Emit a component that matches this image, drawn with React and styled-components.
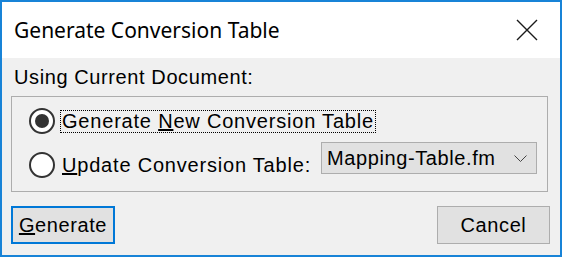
import React from "react";
import styled, { createGlobalStyle } from "styled-components";

const GlobalStyle = createGlobalStyle`
  body {
    margin: 0;
    background: #ffffff;
  }
`;

const Window = styled.div`
  box-sizing: border-box;
  width: 562px;
  height: 257px;
  border: 2px solid #1883d7;
  display: flex;
  flex-direction: column;
  font-family: "Liberation Sans", Arial, sans-serif;
  color: #000;
`;

const TitleBar = styled.div`
  height: 56px;
  flex-shrink: 0;
  background: #ffffff;
  display: flex;
  align-items: center;
  justify-content: space-between;
  padding: 0 21px 0 12px;
`;

const Title = styled.div`
  font-family: "Noto Sans", "Open Sans", sans-serif;
  font-size: 21px;
  color: #000;
`;

const CloseButton = styled.button`
  width: 24px;
  height: 24px;
  padding: 0;
  border: none;
  background: none;
  display: flex;
  align-items: center;
  justify-content: center;
`;

const Body = styled.div`
  flex: 1;
  background: #f0f0f0;
  display: flex;
  flex-direction: column;
  padding: 7px 10px 0 9px;
  font-size: 20px;
  letter-spacing: 0.6px;
  line-height: 24px;
`;

const Caption = styled.div`
  padding-left: 3px;
`;

const GroupBox = styled.div`
  box-sizing: border-box;
  height: 96px;
  margin: 7px 2px 0 0;
  border: 1px solid #adadad;
  padding: 8px 0 0 17px;
  display: flex;
  flex-direction: column;
  gap: 12px;
`;

const Row = styled.label`
  height: 32px;
  display: flex;
  align-items: center;
`;

const Radio = styled.span`
  box-sizing: border-box;
  width: 26px;
  height: 26px;
  border-radius: 50%;
  border: 2px solid #333333;
  background: #ffffff;
  display: flex;
  align-items: center;
  justify-content: center;
  margin-right: 5px;
  flex-shrink: 0;
  &::after {
    content: "";
    width: 14px;
    height: 14px;
    border-radius: 50%;
    background: ${(p) => (p.checked ? "#333333" : "transparent")};
  }
`;

const Label = styled.span`
  padding: 0 1px;
  border: 1px dotted ${(p) => (p.focused ? "#000" : "transparent")};
  line-height: 21px;
  letter-spacing: 0.8px;
`;

const Select = styled.div`
  box-sizing: border-box;
  align-self: flex-start;
  width: 216px;
  height: 32px;
  margin: -7px 0 0 8px;
  background: #e1e1e1;
  border: 1px solid #adadad;
  display: flex;
  align-items: center;
  justify-content: space-between;
  padding: 0 9px 0 5px;
  letter-spacing: 0.6px;
`;

const Footer = styled.div`
  margin-top: 14px;
  display: flex;
  justify-content: space-between;
`;

const Button = styled.button`
  box-sizing: border-box;
  width: ${(p) => p.width}px;
  height: 38px;
  background: #e1e1e1;
  border: ${(p) => (p.primary ? "2px solid #0078d7" : "1px solid #adadad")};
  font-family: inherit;
  font-size: 20px;
  letter-spacing: 0.6px;
  color: #000;
  padding: 0;
`;

export default function App() {
  return (
    <>
      <GlobalStyle />
      <Window>
        <TitleBar>
          <Title>Generate Conversion Table</Title>
          <CloseButton>
            <svg width="22" height="22" viewBox="0 0 22 22">
              <path d="M1 1 L21 21 M21 1 L1 21" stroke="#1a1a1a" strokeWidth="1.4" fill="none" />
            </svg>
          </CloseButton>
        </TitleBar>
        <Body>
          <Caption>Using Current Document:</Caption>
          <GroupBox>
            <Row>
              <Radio checked />
              <Label focused>
                Generate <u>N</u>ew Conversion Table
              </Label>
            </Row>
            <Row>
              <Radio />
              <Label>
                <u>U</u>pdate Conversion Table:
              </Label>
              <Select>
                <span>Mapping-Table.fm</span>
                <svg width="13" height="7" viewBox="0 0 13 7">
                  <path d="M0.5 0.5 L6.5 6.5 L12.5 0.5" stroke="#444" strokeWidth="1" fill="none" />
                </svg>
              </Select>
            </Row>
          </GroupBox>
          <Footer>
            <Button primary width={104}>
              <u>G</u>enerate
            </Button>
            <Button width={113}>Cancel</Button>
          </Footer>
        </Body>
      </Window>
    </>
  );
}
